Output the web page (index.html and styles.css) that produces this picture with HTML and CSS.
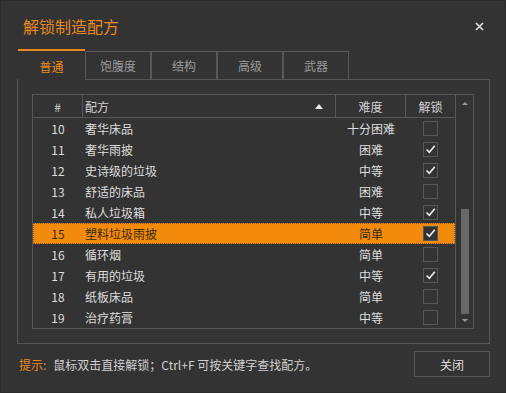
FILE: index.html
```html
<!DOCTYPE html>
<html lang="zh-CN">
<head>
  <meta charset="UTF-8">
  <title>解锁制造配方</title>
  <link rel="stylesheet" href="styles.css">
</head>
<body>
  <div class="window">
    <div class="titlebar">
      <span class="title">解锁制造配方</span>
      <svg class="close" width="9" height="9" viewBox="0 0 9 9">
        <path d="M1 1 L8 8 M8 1 L1 8" stroke="#e6e6e6" stroke-width="1.6" fill="none"/>
      </svg>
    </div>

    <div class="tabs">
      <div class="tab active">普通</div>
      <div class="tab">饱腹度</div>
      <div class="tab">结构</div>
      <div class="tab">高级</div>
      <div class="tab">武器</div>
    </div>

    <div class="panel">
      <div class="table">
        <div class="list">
          <div class="row head">
            <div class="cell num">#</div>
            <div class="cell name">配方<span class="sort"></span></div>
            <div class="cell diff">难度</div>
            <div class="cell lock">解锁</div>
          </div>
          <div class="row"><div class="cell num">10</div><div class="cell name">奢华床品</div><div class="cell diff">十分困难</div><div class="cell lock"><span class="box"></span></div></div>
          <div class="row"><div class="cell num">11</div><div class="cell name">奢华雨披</div><div class="cell diff">困难</div><div class="cell lock"><span class="box checked"></span></div></div>
          <div class="row"><div class="cell num">12</div><div class="cell name">史诗级的垃圾</div><div class="cell diff">中等</div><div class="cell lock"><span class="box checked"></span></div></div>
          <div class="row"><div class="cell num">13</div><div class="cell name">舒适的床品</div><div class="cell diff">困难</div><div class="cell lock"><span class="box"></span></div></div>
          <div class="row"><div class="cell num">14</div><div class="cell name">私人垃圾箱</div><div class="cell diff">中等</div><div class="cell lock"><span class="box checked"></span></div></div>
          <div class="row selected"><div class="cell num">15</div><div class="cell name">塑料垃圾雨披</div><div class="cell diff">简单</div><div class="cell lock"><span class="box checked"></span></div></div>
          <div class="row"><div class="cell num">16</div><div class="cell name">循环烟</div><div class="cell diff">简单</div><div class="cell lock"><span class="box"></span></div></div>
          <div class="row"><div class="cell num">17</div><div class="cell name">有用的垃圾</div><div class="cell diff">中等</div><div class="cell lock"><span class="box checked"></span></div></div>
          <div class="row"><div class="cell num">18</div><div class="cell name">纸板床品</div><div class="cell diff">简单</div><div class="cell lock"><span class="box"></span></div></div>
          <div class="row"><div class="cell num">19</div><div class="cell name">治疗药膏</div><div class="cell diff">中等</div><div class="cell lock"><span class="box"></span></div></div>
        </div>
        <div class="scrollbar">
          <span class="arrow up"></span>
          <div class="track"><div class="thumb"></div></div>
          <span class="arrow down"></span>
        </div>
      </div>
    </div>

    <div class="footer">
      <span class="hint-label">提示:</span>
      <span class="hint">鼠标双击直接解锁；Ctrl+F 可按关键字查找配方。</span>
      <button class="btn">关闭</button>
    </div>
  </div>
</body>
</html>
```

FILE: styles.css
```css
:root {
  --bg: #333333;
  --line: #575757;
  --text: #dedede;
  --muted: #9a9a9a;
  --orange: #e98a1f;
  --select: #f28b0c;
}
* {
  box-sizing: border-box;
}
body {
  margin: 0;
  background: var(--bg);
  font-family: "Noto Sans CJK SC", "Noto Sans", sans-serif;
  font-size: 12px;
  color: var(--text);
}
.window {
  width: 506px;
  height: 393px;
  border: 1px solid #2a2a2a;
  background: var(--bg);
}
.titlebar {
  height: 48px;
  padding: 2px 22px 0 22px;
  display: flex;
  align-items: center;
  justify-content: space-between;
}
.title {
  font-size: 16px;
  color: var(--orange);
  line-height: 24px;
}
.close {
  margin-right: -1px;
}

/* tabs */
.tabs {
  display: flex;
  align-items: flex-end;
  margin-left: 17px;
  height: 30px;
}
.tab {
  width: 66px;
  height: 28px;
  border: 1px solid var(--line);
  border-bottom: none;
  display: flex;
  align-items: center;
  justify-content: center;
  color: var(--muted);
}
.tab.active {
  width: 67px;
  height: 31px;
  border: none;
  border-top: 2px solid var(--orange);
  background: var(--bg);
  color: var(--orange);
  position: relative;
  margin-bottom: -1px;
  z-index: 1;
  padding-top: 1px;
}
.panel {
  margin-left: 16px;
  width: 473px;
  border: 1px solid var(--line);
  padding: 14px 15px 14px 14px;
}

/* table */
.table {
  display: flex;
  border: 1px solid var(--line);
  height: 235px;
}
.list {
  width: 422px;
}
.row {
  display: grid;
  grid-template-columns: 50px 253px 70px 49px;
  height: 21px;
  align-items: center;
}
.row.head {
  height: 23px;
  border-bottom: 1px solid var(--line);
  color: #d2d2d2;
}
.row.head .cell {
  height: 22px;
  display: flex;
  align-items: center;
  border-right: 1px solid var(--line);
}
.row.head .cell.lock {
  border-right: none;
}
.cell {
  white-space: nowrap;
}
.num, .diff, .lock {
  text-align: center;
  justify-content: center;
}
.name {
  padding-left: 2px;
}
.row.head .name {
  justify-content: space-between;
  padding-right: 12px;
}
.sort {
  width: 0;
  height: 0;
  border-left: 4px solid transparent;
  border-right: 4px solid transparent;
  border-bottom: 5px solid #e8e8e8;
}
.lock {
  display: flex;
  align-items: center;
}
.box {
  width: 15px;
  height: 15px;
  border: 1px solid var(--line);
  display: inline-block;
}
.box.checked {
  background-image: url("data:image/svg+xml,%3Csvg xmlns='http://www.w3.org/2000/svg' width='13' height='13'%3E%3Cpath d='M2.5 6.5 L5.3 9.3 L10.8 2.8' stroke='%23ececec' stroke-width='1.7' fill='none'/%3E%3C/svg%3E");
  background-repeat: no-repeat;
  background-position: center;
}
.row.selected {
  background: var(--select);
  color: #3b2a12;
  outline: 1px dotted #8c5a14;
  outline-offset: -1px;
}
.row.selected .box {
  background-color: #333;
}

/* scrollbar */
.scrollbar {
  width: 18px;
  border-left: 1px solid var(--line);
  display: flex;
  flex-direction: column;
  align-items: center;
  padding: 7px 0 6px;
}
.arrow {
  width: 0;
  height: 0;
  border-left: 3px solid transparent;
  border-right: 3px solid transparent;
}
.arrow.up {
  border-bottom: 3px solid #9a9a9a;
}
.arrow.down {
  border-top: 3px solid #9a9a9a;
}
.track {
  flex: 1;
  width: 8px;
  display: flex;
  flex-direction: column;
  justify-content: flex-end;
  padding-bottom: 5px;
}
.thumb {
  height: 105px;
  background: #686868;
}

/* footer */
.footer {
  display: flex;
  align-items: center;
  margin-top: 7px;
  padding: 0 15px 0 18px;
}
.hint-label {
  color: var(--orange);
  margin-right: 7px;
}
.hint {
  color: #d0d0d0;
  flex: 1;
}
.btn {
  width: 76px;
  height: 26px;
  border: 1px solid var(--line);
  background: var(--bg);
  color: var(--text);
  font-family: inherit;
  font-size: 12px;
  padding: 0;
}
```
